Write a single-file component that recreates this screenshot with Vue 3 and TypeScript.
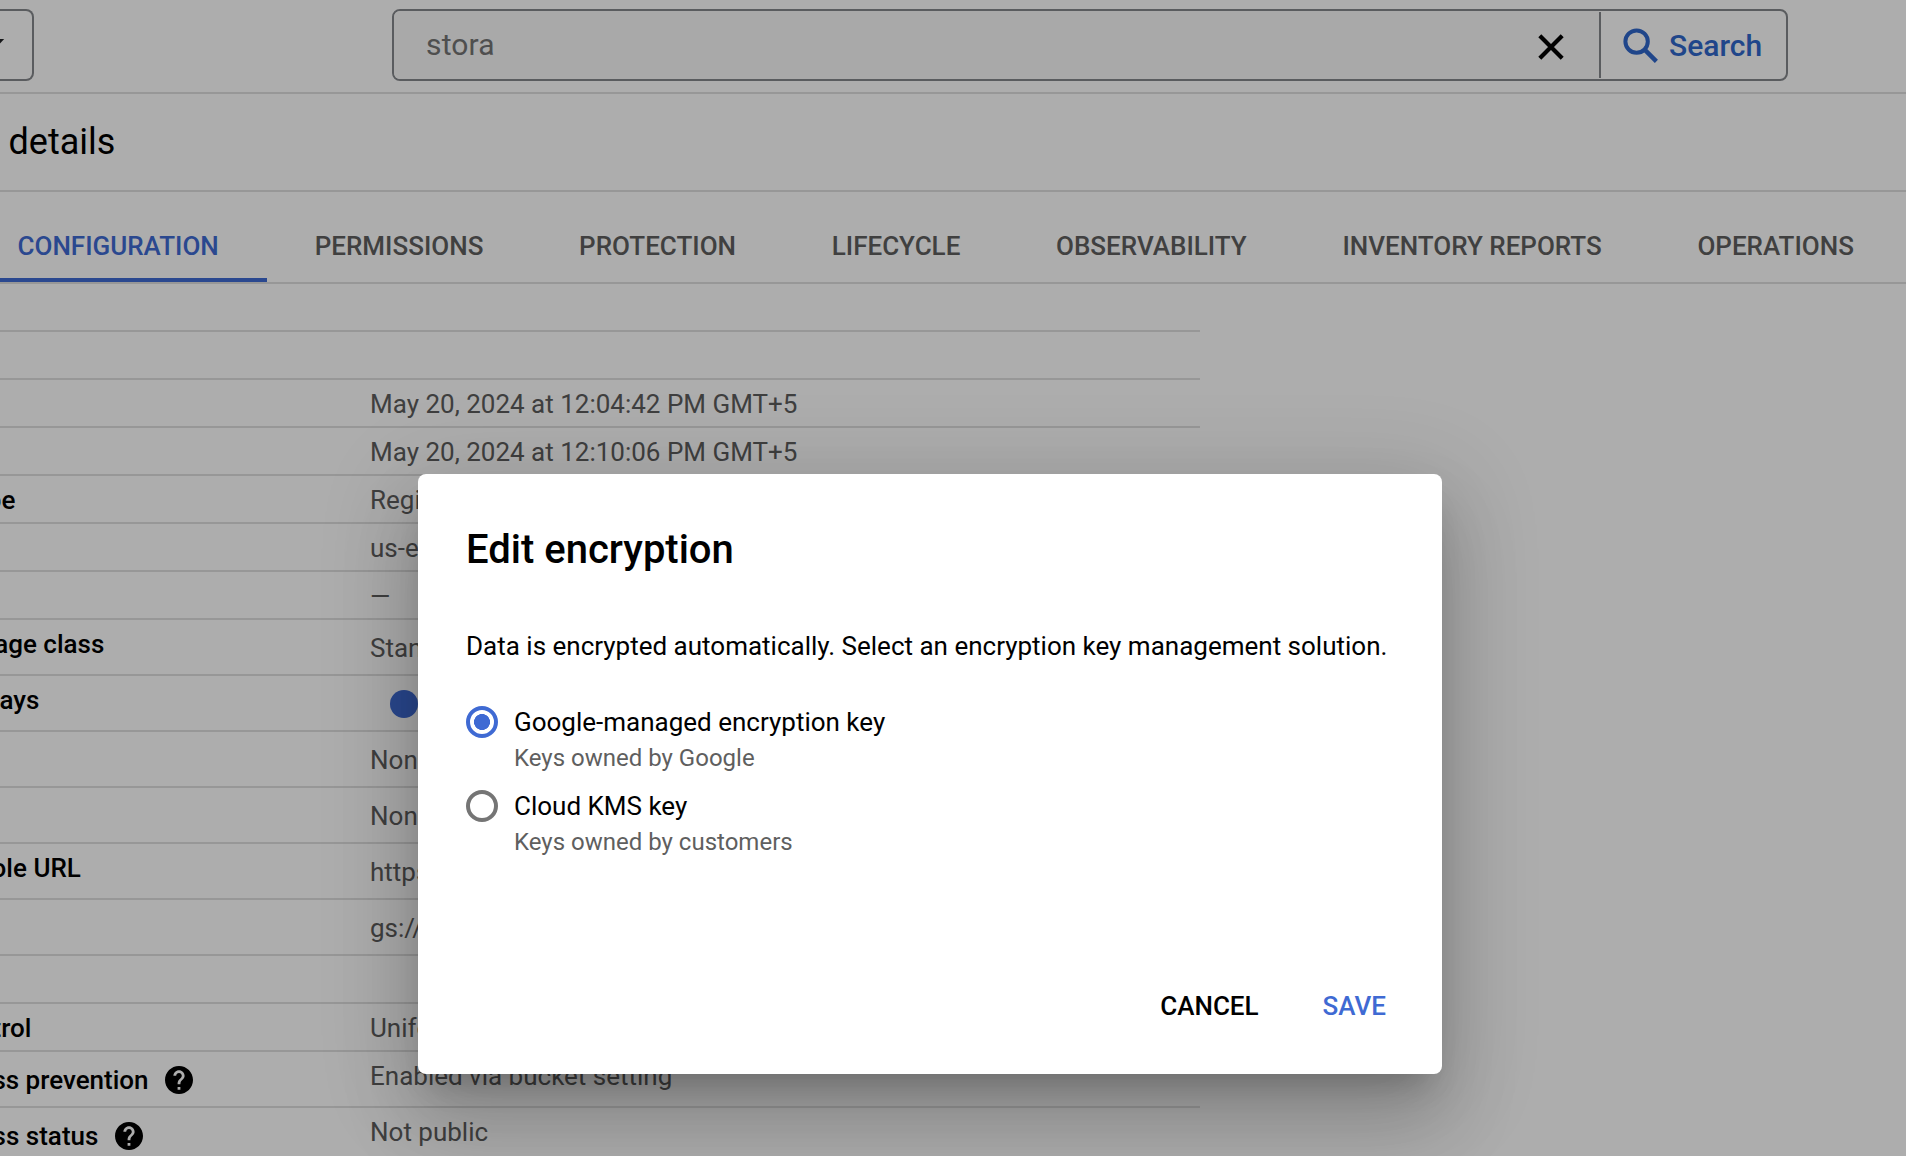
<script setup lang="ts">
import { ref } from 'vue'

interface Row {
  label?: string
  labelEnd?: number
  value?: string
  tall?: boolean
  help?: boolean
  toggle?: boolean
}

const tabs = ['CONFIGURATION', 'PERMISSIONS', 'PROTECTION', 'LIFECYCLE', 'OBSERVABILITY', 'INVENTORY REPORTS', 'OPERATIONS']

const rows: Row[] = [
  {},
  { value: 'May 20, 2024 at 12:04:42 PM GMT+5' },
  { value: 'May 20, 2024 at 12:10:06 PM GMT+5' },
  { label: 'pe', labelEnd: 15.4, value: 'Region' },
  { value: 'us-east1' },
  { value: '—' },
  { label: 'age class', labelEnd: 104.3, value: 'Standard', tall: true },
  { label: 'ays', labelEnd: 39.5, toggle: true, tall: true },
  { value: 'None', tall: true },
  { value: 'None', tall: true },
  { label: 'ole URL', labelEnd: 80.8, value: 'https://', tall: true },
  { value: 'gs://', tall: true },
  {},
  { label: 'trol', labelEnd: 31.4, value: 'Uniform' },
  { label: 'ss prevention', labelEnd: 148.6, value: 'Enabled via bucket setting', tall: true, help: true },
  { label: 'ss status', labelEnd: 98.4, value: 'Not public', tall: true, help: true },
]

const options = [
  { id: 'google', title: 'Google-managed encryption key', hint: 'Keys owned by Google' },
  { id: 'kms', title: 'Cloud KMS key', hint: 'Keys owned by customers' },
]
const selected = ref('google')
</script>

<template>
  <div class="screen">
    <header class="topbar">
      <div class="picker"><svg width="5" height="10" viewBox="0 0 5 10"><path d="M0 0H4.2L0 4.4Z" fill="#202124" /></svg></div>
      <div class="search">
        <div class="field">
          <span class="query">stora</span>
          <svg class="clear" width="26" height="26" viewBox="0 0 26 26"><path d="M1.8 1.8L24.2 24.2M24.2 1.8L1.8 24.2" stroke="#000" stroke-width="4.2" /></svg>
        </div>
        <div class="go">
          <svg width="36" height="36" viewBox="0 0 36 36" fill="none" stroke="#3067cc" stroke-width="4"><circle cx="13.6" cy="13.6" r="11.2" /><path d="M21.4 21.4L33.4 33.4" stroke-width="4.4" /></svg>
          <span>Search</span>
        </div>
      </div>
    </header>

    <div class="heading">details</div>

    <nav class="tabs">
      <div v-for="(tab, i) in tabs" :key="tab" class="tab" :class="{ active: i === 0 }">{{ tab }}</div>
    </nav>

    <section class="table">
      <div v-for="(row, i) in rows" :key="i" class="row" :class="{ tall: row.tall, helped: row.help }">
        <div class="label">
          <span v-if="row.label" class="label-text" :style="{ width: row.labelEnd + 'px' }">{{ row.label }}</span>
          <svg v-if="row.help" class="help" width="28" height="28" viewBox="2 2 20 20"><path d="M12 2C6.48 2 2 6.48 2 12s4.480 10 10 10 10-4.480 10-10S17.520 2 12 2zm1 17h-2v-2h2v2zm2.070-7.750l-.9.920C13.450 12.900 13 13.500 13 15h-2v-.5c0-1.100.45-2.100 1.170-2.830l1.240-1.260c.37-.36.59-.86.59-1.410 0-1.100-.9-2-2-2s-2 .9-2 2H8c0-2.210 1.790-4 4-4s4 1.790 4 4c0 .88-.36 1.680-.93 2.250z" fill="#000" /></svg>
        </div>
        <div class="value">
          <span v-if="row.toggle" class="knob"></span>
          <template v-else>{{ row.value }}</template>
        </div>
      </div>
    </section>

    <div class="overlay">
      <div class="dialog" role="dialog">
        <h2>Edit encryption</h2>
        <p class="lead">Data is encrypted automatically. Select an encryption key management solution.</p>
        <div class="options">
          <div v-for="o in options" :key="o.id" class="option" @click="selected = o.id">
            <span class="radio" :class="{ on: selected === o.id }"></span>
            <div>
              <div class="opt-title">{{ o.title }}</div>
              <div class="opt-hint">{{ o.hint }}</div>
            </div>
          </div>
        </div>
        <div class="actions">
          <span>CANCEL</span>
          <span class="save">SAVE</span>
        </div>
      </div>
    </div>
  </div>
</template>

<style>
body {
  overflow: hidden;
}
</style>

<style scoped>
.screen {
  position: relative;
  width: 1906px;
  height: 1156px;
  overflow: hidden;
  background: #fff;
  color: #000;
  font: 400 26px/32px Roboto, sans-serif;
  white-space: nowrap;
}
.screen * {
  box-sizing: border-box;
}
.topbar {
  display: flex;
  align-items: flex-start;
  height: 94px;
  padding-top: 9px;
  border-bottom: 2px solid #dfdfdf;
}
.picker {
  width: 34px;
  height: 72px;
  padding-top: 28px;
  border: 2px solid #85888c;
  border-left: 0;
  border-radius: 0 8px 8px 0;
  line-height: 0;
}
.search {
  display: flex;
  width: 1396px;
  height: 72px;
  margin-left: 358px;
  border: 2px solid #85888c;
  border-radius: 8px;
  font-size: 30px;
}
.field {
  display: flex;
  flex: 1;
  align-items: center;
  justify-content: space-between;
  padding: 0 35px 0 32px;
  background: #f9f9f9;
  border-radius: 6px 0 0 6px;
}
.query {
  color: #757575;
  letter-spacing: 0.15px;
}
.clear {
  margin-top: 4px;
}
.go {
  display: flex;
  align-items: center;
  width: 187px;
  margin: 1px 0;
  padding-left: 22px;
  border-left: 2px solid #85888c;
  color: #3067cc;
  font-weight: 500;
}
.go svg {
  margin-top: 2px;
}
.go span {
  margin: 2px 0 0 10px;
}
.heading {
  height: 98px;
  padding: 24px 0 0 8.5px;
  border-bottom: 2px solid #dfdfdf;
  font-size: 36px;
  line-height: 48px;
}
.tabs {
  display: flex;
  height: 92px;
  border-bottom: 2px solid #dfdfdf;
}
.tab {
  height: 90px;
  padding: 38px 48px 0 47.7px;
  color: #5f5f5f;
  font-weight: 500;
}
.tab.active {
  width: 267px;
  padding-left: 17.5px;
  color: #3f6ad3;
  border-bottom: 4px solid #3f6ad3;
}
.table {
  width: 1200px;
  margin-top: 46px;
}
.row {
  display: flex;
  height: 48px;
  padding-top: 8px;
  border-top: 2px solid #dfdfdf;
}
.row.tall {
  height: 56px;
}
.label {
  display: flex;
  width: 370px;
  font-weight: 500;
}
.label-text {
  display: flex;
  justify-content: flex-end;
}
.value {
  color: #5d5d5d;
}
.tall .value {
  padding-top: 4px;
}
.helped .label {
  padding-top: 4px;
}
.helped .value {
  padding-top: 0;
}
.help {
  margin: 2px 0 0 16.5px;
}
.knob {
  display: block;
  width: 28px;
  height: 28px;
  margin: 2px 0 0 20px;
  border-radius: 50%;
  background: #3f6ad3;
}
.overlay {
  position: absolute;
  inset: 0;
  padding: 474px 0 0 418px;
  background: rgba(0, 0, 0, 0.32);
}
.dialog {
  display: flex;
  flex-direction: column;
  width: 1024px;
  height: 600px;
  padding: 48px 56px 48px 48px;
  border-radius: 8px;
  background: #fff;
  box-shadow: 0 22px 30px -14px rgba(0, 0, 0, 0.2), 0 48px 76px 6px rgba(0, 0, 0, 0.14), 0 18px 92px 16px rgba(0, 0, 0, 0.12);
}
h2 {
  margin: 4px 0 0;
  font-size: 40px;
  font-weight: 500;
  line-height: 48px;
}
.lead {
  margin: 56px 0 0;
}
.options {
  margin-top: 44px;
}
.option {
  display: flex;
  height: 84px;
}
.radio {
  width: 32px;
  height: 32px;
  margin: 0 16px 0 0;
  border: 4px solid #757575;
  border-radius: 50%;
}
.radio.on {
  border-color: #3f6ad3;
  background: radial-gradient(circle, #3f6ad3 7.7px, transparent 8.3px);
}
.opt-hint {
  margin-top: 4px;
  color: #5f5f5f;
  font-size: 24px;
}
.actions {
  display: flex;
  justify-content: flex-end;
  gap: 64px;
  margin-top: 116px;
  font-weight: 500;
}
.save {
  color: #3f6ad3;
}
</style>
